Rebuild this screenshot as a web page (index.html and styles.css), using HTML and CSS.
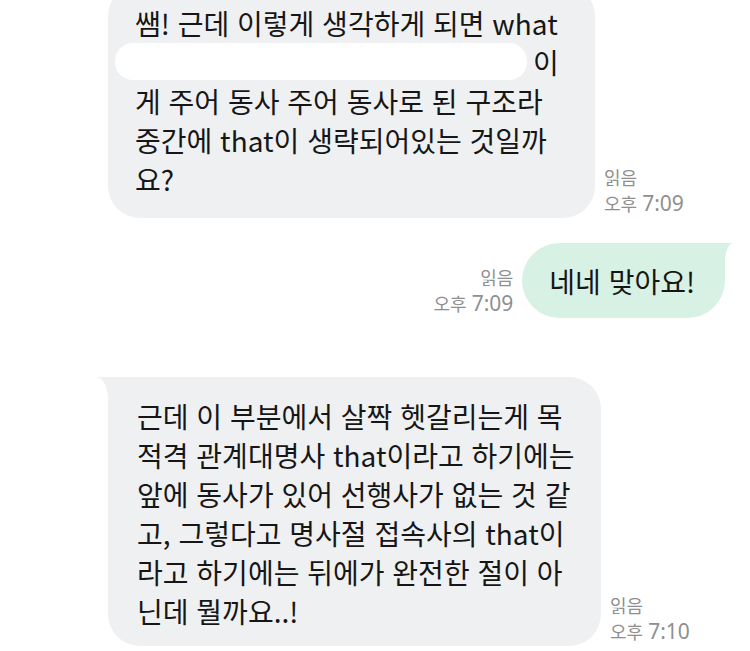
FILE: index.html
```html
<!DOCTYPE html>
<html lang="ko">
<head>
    <meta charset="UTF-8">
    <meta name="viewport" content="width=device-width, initial-scale=1.0">
    <title>대화</title>
    <link rel="stylesheet" href="styles.css">
</head>
<body>
    <div class="chat">
        <div class="row row-in first">
            <div class="bubble bubble-in wide1">
                쌤! 근데 이렇게 생각하게 되면 what<br>
                <span class="redact"></span>이<br>
                게 주어 동사 주어 동사로 된 구조라<br>
                중간에 that이 생략되어있는 것일까<br>
                요?
            </div>
            <div class="meta">
                <div>읽음</div>
                <div>오후 <span class="num">7:09</span></div>
            </div>
        </div>

        <div class="row row-out">
            <div class="meta meta-right">
                <div>읽음</div>
                <div>오후 <span class="num">7:09</span></div>
            </div>
            <div class="bubble bubble-out">네네 맞아요!</div>
        </div>

        <div class="row row-in last">
            <div class="bubble bubble-in tail wide2">
                근데 이 부분에서 살짝 헷갈리는게 목<br>
                적격 관계대명사 that이라고 하기에는<br>
                앞에 동사가 있어 선행사가 없는 것 같<br>
                고, 그렇다고 명사절 접속사의 that이<br>
                라고 하기에는 뒤에가 완전한 절이 아<br>
                닌데 뭘까요..!
            </div>
            <div class="meta">
                <div>읽음</div>
                <div>오후 <span class="num">7:10</span></div>
            </div>
        </div>
    </div>
</body>
</html>
```

FILE: styles.css
```css
body {
    margin: 0;
    background-color: #ffffff;
    font-family: "Noto Sans CJK KR", "Noto Sans", sans-serif;
    color: #161616;
    overflow: hidden;
}
.chat {
    display: flex;
    flex-direction: column;
    width: 750px;
}
.row {
    display: flex;
    align-items: flex-end;
    gap: 9px;
}
.row-in {
    padding-left: 108px;
}
.row-out {
    justify-content: flex-end;
    padding-right: 25px;
    margin-top: 25px;
}
.first {
    margin-top: -16px;
}
.last {
    margin-top: 59px;
}
.bubble {
    position: relative;
    font-size: 28px;
    line-height: 39px;
    white-space: nowrap;
    padding: 20px 28px 19px 27px;
    border-radius: 32px;
}
.bubble-in {
    background-color: #eff0f2;
}
.wide1 {
    width: 432px;
}
.wide2 {
    width: 436px;
    padding-left: 29px;
    padding-bottom: 15px;
    border-top-left-radius: 0;
}
.bubble-out {
    background-color: #d8f1e5;
    padding: 19px 30px 17px 27px;
    border-radius: 38px;
    border-top-right-radius: 0;
}
/* little tails */
.tail::before {
    content: "";
    position: absolute;
    left: -11px;
    top: 0;
    width: 11px;
    height: 22px;
    background: radial-gradient(ellipse 11px 22px at 0 100%, transparent 96%, #eff0f2 100%);
}
.bubble-out::after {
    content: "";
    position: absolute;
    right: -8px;
    top: 0;
    width: 8px;
    height: 18px;
    background: radial-gradient(ellipse 8px 18px at 100% 100%, transparent 96%, #d8f1e5 100%);
}
.redact {
    display: inline-block;
    width: 412px;
    height: 37px;
    margin-left: -20px;
    margin-right: 6px;
    vertical-align: top;
    background-color: #ffffff;
    border-radius: 18px;
}
.meta {
    font-size: 18px;
    line-height: 26px;
    color: #8f8f8f;
    margin-bottom: 2px;
    white-space: nowrap;
}
.meta-right {
    text-align: right;
}
.num {
    font-family: "Noto Sans", sans-serif;
    font-size: 21px;
}
```
